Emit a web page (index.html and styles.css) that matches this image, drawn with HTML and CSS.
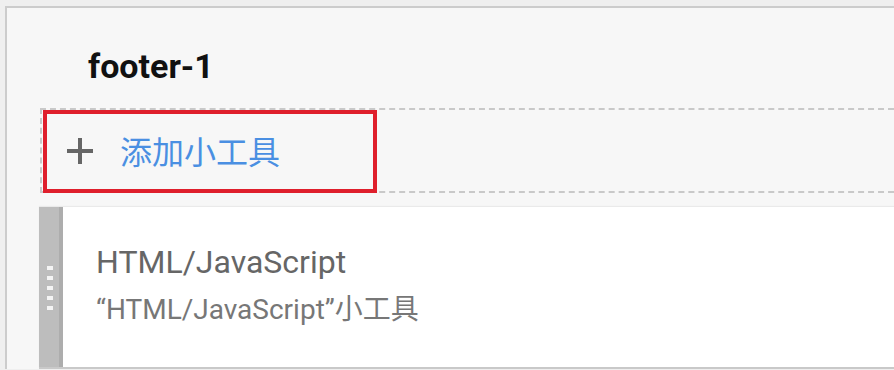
FILE: index.html
```html
<html>
<head>
    <title>footer-1</title>
<link rel="stylesheet" href="styles.css">
</head>
<body>
<div class="page">
    <div class="panel">
        <h2 class="sectionTitle">footer-1</h2>
        <div class="addWidget">
            <span class="plus"></span>
            <span class="addLabel">添加小工具</span>
            <div class="highlight"></div>
        </div>
        <div class="widget">
            <div class="handle">
                <span></span>
                <span></span>
                <span></span>
                <span></span>
                <span></span>
            </div>
            <div class="widgetBody">
                <div class="widgetTitle">HTML/JavaScript</div>
                <div class="widgetDesc">“HTML/JavaScript”小工具</div>
            </div>
        </div>
    </div>
</div>
</body>
</html>
```

FILE: styles.css
```css
html, body {
    overflow: hidden;
}
body {
    margin: 0;
    padding: 0;
    background: #efefef;
    font-family: Roboto, "Noto Sans CJK SC", sans-serif;
}
.page {
    padding: 6px 0 0 5px;
}
.panel {
    background: #f7f7f7;
    border-top: 2px solid #cccccc;
    border-left: 2px solid #cccccc;
    padding-left: 33px;
}
.sectionTitle {
    margin: 38px 0 22px 48px;
    font-size: 34px;
    line-height: 40px;
    font-weight: bold;
    color: #111;
}
.addWidget {
    position: relative;
    display: flex;
    align-items: center;
    height: 81px;
    border: 2px dashed #c9c9c9;
    border-right: none;
    padding-left: 25px;
}
.plus {
    position: relative;
    width: 26px;
    height: 26px;
    margin-top: 1px;
}
.plus:before,
.plus:after {
    content: "";
    position: absolute;
    background: #666;
}
.plus:before {
    left: 0;
    right: 0;
    top: 11px;
    height: 4px;
}
.plus:after {
    top: 0;
    bottom: 0;
    left: 11px;
    width: 4px;
}
.addLabel {
    margin-left: 27px;
    margin-top: -2px;
    font-size: 32px;
    color: #4a8fe2;
}
.highlight {
    position: absolute;
    left: 1px;
    top: 0;
    width: 326px;
    height: 75px;
    border: 4px solid #df1f2c;
}
.widget {
    display: flex;
    margin: 14px 0 0 -1px;
    height: 160px;
    background: #fff;
    border-bottom: 2px solid #c9c9c9;
    box-shadow: 0 -1px 1px rgba(0,0,0,0.05);
}
.handle {
    box-sizing: border-box;
    width: 24px;
    padding: 2px 0 0 8px;
    background: #bdbdbd;
    border-right: 4px solid #adadad;
    display: flex;
    flex-direction: column;
    justify-content: center;
    gap: 6px;
}
.handle span {
    display: block;
    width: 6px;
    height: 4px;
    background: #f4f4f4;
}
.widgetBody {
    padding: 36px 0 0 33px;
}
.widgetTitle {
    font-size: 32px;
    line-height: 38px;
    color: #666;
}
.widgetDesc {
    margin-top: 12px;
    font-size: 28px;
    line-height: 34px;
    color: #777;
}
```
